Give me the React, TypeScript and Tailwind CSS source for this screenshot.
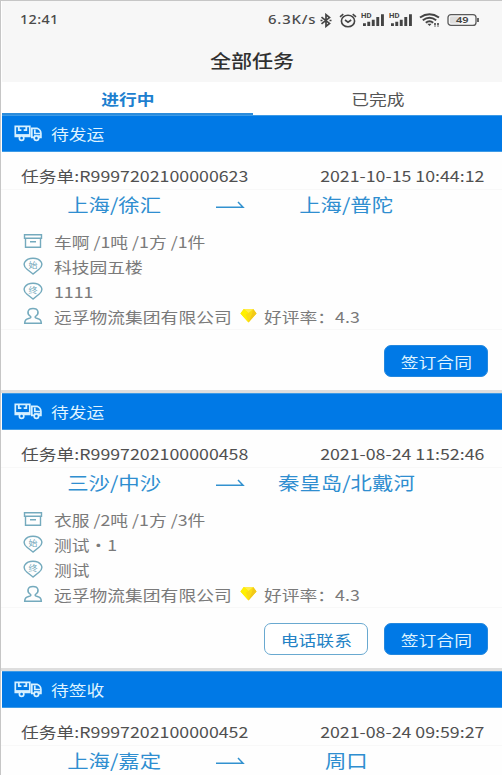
import type { ReactNode } from "react";

type Task = {
  status: string;
  order: string;
  time: string;
  from: string;
  to: string;
  rows?: string[];
  actions: string[];
};

const company = "远孚物流集团有限公司";

const tasks: Task[] = [
  {
    status: "待发运",
    order: "任务单:R9997202100000623",
    time: "2021-10-15 10:44:12",
    from: "上海/徐汇",
    to: "上海/普陀",
    rows: ["车啊 /1吨 /1方 /1件", "科技园五楼", "1111"],
    actions: ["签订合同"],
  },
  {
    status: "待发运",
    order: "任务单:R9997202100000458",
    time: "2021-08-24 11:52:46",
    from: "三沙/中沙",
    to: "秦皇岛/北戴河",
    rows: ["衣服 /2吨 /1方 /3件", "测试・1", "测试"],
    actions: ["电话联系", "签订合同"],
  },
  {
    status: "待签收",
    order: "任务单:R9997202100000452",
    time: "2021-08-24 09:59:27",
    from: "上海/嘉定",
    to: "周口",
    actions: [],
  },
];

/* Wide-set text used across the page */
function Wide({ children, className = "" }: { children: ReactNode; className?: string }) {
  return <span className={`inline-block scale-x-[1.17] whitespace-nowrap ${className}`}>{children}</span>;
}

function Bluetooth() {
  return (
    <svg width="12" height="15" viewBox="0 0 12 15" fill="none" stroke="#444" strokeWidth="1.7">
      <path d="M1.5 4.2 9.5 10.4 6 13.3V1.7l3.500 2.900-8 6.200" />
      <path d="M.5 7.500h2M9.500 7.500h2" />
    </svg>
  );
}

function Alarm() {
  return (
    <svg width="18" height="15" viewBox="0 0 18 15" fill="none" stroke="#444" strokeWidth="1.6">
      <ellipse cx="9" cy="8" rx="6.6" ry="5.7" />
      <path d="M6 7l3 2.2L12.2 7M1 3.8 4.3 1.2M17 3.8l-3.3-2.6" />
    </svg>
  );
}

function Signal() {
  return (
    <svg width="24" height="14" viewBox="0 0 24 14" fill="#444">
      <text x="0" y="5.4" fontSize="6.4" fontWeight="700" fontFamily="Roboto, sans-serif" textLength="10.5" lengthAdjust="spacingAndGlyphs">
        HD
      </text>
      <path d="M2 10.300h2.900V13H2zM6.300 8.800h2.900V13H6.300zM10.800 6.800h2.900V13h-2.900zM15.300 4h2.900v9h-2.900zM20 1.300h2.900V13H20z" />
    </svg>
  );
}

function Wifi() {
  return (
    <svg width="21" height="14" viewBox="0 0 21 14" fill="none" stroke="#444" strokeWidth="2">
      <path d="M1 4.500Q10.500-2 20 4.500M3.800 7.200Q10.500 2.300 17.200 7.200M6.800 9.700Q10.500 6.700 14.200 9.700" />
      <path d="M8.300 10.700h4.400l-2.200 2.300z" fill="#444" stroke="none" />
      <path d="M16 10v3.500M19 10v3.500" strokeWidth="1.600" strokeDasharray="2 .6" />
    </svg>
  );
}

function Battery() {
  return (
    <svg width="33" height="14" viewBox="0 0 33 14" fill="none">
      <rect x="1" y="1.600" width="28" height="10.800" rx="3" stroke="#5a5a5a" strokeWidth="1.300" />
      <rect x="3" y="3.500" width="9" height="7" rx="1" fill="#dedede" />
      <path d="M31 5v4" stroke="#555" strokeWidth="1.800" />
      <text x="9" y="10" fontSize="8.500" fontWeight="600" fill="#444" fontFamily="Noto Sans, sans-serif" textLength="12.500" lengthAdjust="spacingAndGlyphs">
        49
      </text>
    </svg>
  );
}

function Truck() {
  return (
    <svg width="28" height="17" viewBox="0 0 28 17" fill="none" stroke="#d8f1ff" strokeWidth="1.700">
      <path d="M1.300 1.400h14.500v10H1.300z" />
      <path d="M1.500 10.400h14" strokeWidth="2.600" />
      <path d="M4.800 2v3.200h2.600M12.300 2v3.200H9.700" strokeWidth="1.800" />
      <circle cx="7.600" cy="13.200" r="2.200" fill="#0079e6" />
      <path d="M17.800 12.300v-9h5.200q3.700 1.300 3.900 5v4z" />
      <path d="M20.800 4.500v4h5.500M20 11h6.500" strokeWidth="1.700" />
      <circle cx="22.400" cy="13.200" r="2.200" fill="#0079e6" />
    </svg>
  );
}

function Arrow() {
  return (
    <svg width="30" height="10" viewBox="0 0 30 10" fill="none" stroke="#3291cf" strokeWidth="1.500">
      <path d="M1 7.200h27L23 2" />
    </svg>
  );
}

function Box() {
  return (
    <svg width="20" height="16" viewBox="0 0 20 16" fill="none" stroke="#74aabd" strokeWidth="1.400">
      <path d="M1.500 1.800h17v3.400h-17zM2.500 5.200v9h15v-9M7 8.800h6" />
    </svg>
  );
}

function Pin({ label }: { label: string }) {
  return (
    <svg width="20" height="18" viewBox="0 0 20 18" fill="none" stroke="#74aabd" strokeWidth="1.400">
      <path d="M10 17 4 12.300C-2 7.500 2.500 1.200 10 1.200S22 7.500 16 12.300z" />
      <text x="5.500" y="10.800" fontSize="8" fill="#6fa6ba" stroke="none" fontFamily="Noto Sans CJK SC, sans-serif" textLength="9" lengthAdjust="spacingAndGlyphs">
        {label}
      </text>
    </svg>
  );
}

function Person() {
  return (
    <svg width="20" height="18" viewBox="0 0 20 18" fill="none" stroke="#74aabd" strokeWidth="1.500">
      <path d="M7.600 9.500C3.200 6.500 4.500 1.500 10 1.500s6.800 5 2.400 8c-.7 1 .1 1.600 2 2 2.500.5 3.900 1.500 3.900 4.700H1.700c0-3.200 1.400-4.200 3.900-4.700 1.900-.4 2.700-1 2-2z" />
    </svg>
  );
}

function Gem() {
  return (
    <svg width="17" height="15" viewBox="0 0 18 15" preserveAspectRatio="none">
      <path d="M4 1h10l3.500 4.500L9 14.500.5 5.500z" fill="#fbdc14" />
      <path d="M4 1h10l-5 4z" fill="#ffec4d" />
      <path d="M4 1 9 5l-3 1.500 3 8-8.500-9z" fill="#fff000" />
      <path d="M14 1l3.500 4.500-8.500 9 3.500-8z" fill="#f2c91a" />
    </svg>
  );
}

function DetailRow({ icon, children }: { icon: ReactNode; children: ReactNode }) {
  return (
    <div className="flex h-[25.5px] items-center pl-[22px] text-[15.2px] text-[#7a7a7a]">
      <span className="flex w-[31px] shrink-0">{icon}</span>
      {children}
    </div>
  );
}

function TaskCard({ task }: { task: Task }) {
  return (
    <section className="flex shrink-0 flex-col bg-[#fefefe]">
      <header className="ml-px flex h-[37px] shrink-0 items-center border-y border-[#3d9ae6] bg-[#0079e6] pl-3 text-[15.2px] text-[#dff3ff]">
        <Truck />
        <Wide className="ml-[9px] origin-left">{task.status}</Wide>
      </header>
      <div className="flex h-[38px] shrink-0 items-center justify-between border-b border-[#f8f8f8] pt-[9px] pr-[18px] pl-5 text-[15.2px] text-[#505050]">
        <Wide className="origin-left">{task.order}</Wide>
        <Wide className="origin-right">{task.time}</Wide>
      </div>
      <div className="ml-[55px] grid h-[29px] w-[348px] shrink-0 grid-cols-3 items-center text-[18.3px] text-[#2f8ed0]">
        <span className="flex justify-center"><Wide>{task.from}</Wide></span>
        <span className="flex justify-center"><Arrow /></span>
        <span className="flex justify-center"><Wide>{task.to}</Wide></span>
      </div>
      {task.rows && (
        <>
          <div className="flex h-[111px] shrink-0 flex-col border-b border-[#f8f8f8] pt-[9.5px]">
            <DetailRow icon={<Box />}><Wide className="origin-left">{task.rows[0]}</Wide></DetailRow>
            <DetailRow icon={<Pin label="始" />}><Wide className="origin-left">{task.rows[1]}</Wide></DetailRow>
            <DetailRow icon={<Pin label="终" />}><Wide className="origin-left">{task.rows[2]}</Wide></DetailRow>
            <DetailRow icon={<Person />}>
              <span className="w-[186px]"><Wide className="origin-left">{company}</Wide></span>
              <span className="-mt-0.5 w-6"><Gem /></span>
              <Wide className="origin-left">好评率：4.3</Wide>
            </DetailRow>
          </div>
          <div className="flex h-[60px] shrink-0 items-start justify-end gap-4 pt-[15px] pr-[14px] text-[15.2px]">
            {task.actions.map((action) => (
              <button
                key={action}
                className={
                  action === "签订合同"
                    ? "flex h-8 w-[104px] items-center justify-center rounded-[7px] border border-[#2488df] bg-[#0079e6] text-[#dff3ff]"
                    : "flex h-8 w-[104px] items-center justify-center rounded-[7px] border border-[#69a9d0] bg-white text-[#2382c5]"
                }
              >
                <Wide>{action}</Wide>
              </button>
            ))}
          </div>
          <div className="h-[3px] shrink-0 bg-[#dedede]" />
        </>
      )}
    </section>
  );
}

export default function App() {
  return (
    <main className="flex h-[775px] w-[502px] flex-col overflow-hidden border-t border-l border-[#c6c6c6] bg-white font-['Noto_Sans_CJK_SC',sans-serif]">
      <div className="ml-px h-[81px] shrink-0 bg-[#f7f7f7]">
        <div className="flex h-[38px] items-center justify-between pr-[22px] pl-[18px] font-['Noto_Sans',sans-serif] text-[12.5px] font-medium text-[#4a4a4a]">
          <span className="inline-block origin-left scale-x-[1.15] tracking-[0.3px]">12:41</span>
          <div className="flex items-center">
            <span className="inline-block w-[52px] origin-left scale-x-[1.19] tracking-[0.7px] whitespace-nowrap">6.3K/s</span>
            <Bluetooth />
            <span className="ml-[7px] flex"><Alarm /></span>
            <span className="ml-1 flex gap-1"><Signal /><Signal /></span>
            <span className="ml-1.5 flex"><Wifi /></span>
            <span className="ml-[7px] flex"><Battery /></span>
          </div>
        </div>
        <h1 className="flex h-[42px] items-center justify-center text-[18px] font-medium text-[#303030]"><Wide>全部任务</Wide></h1>
      </div>
      <nav className="ml-px flex h-[33px] shrink-0 text-[15.2px]">
        <div className="flex w-[251px] items-center justify-center border-b-2 border-[#2c8cdb] pt-0.5 font-bold text-[#1d80cf]"><Wide>进行中</Wide></div>
        <div className="flex flex-1 items-center justify-center text-[#555]"><Wide>已完成</Wide></div>
      </nav>
      {tasks.map((task) => (
        <TaskCard key={task.order} task={task} />
      ))}
    </main>
  );
}
